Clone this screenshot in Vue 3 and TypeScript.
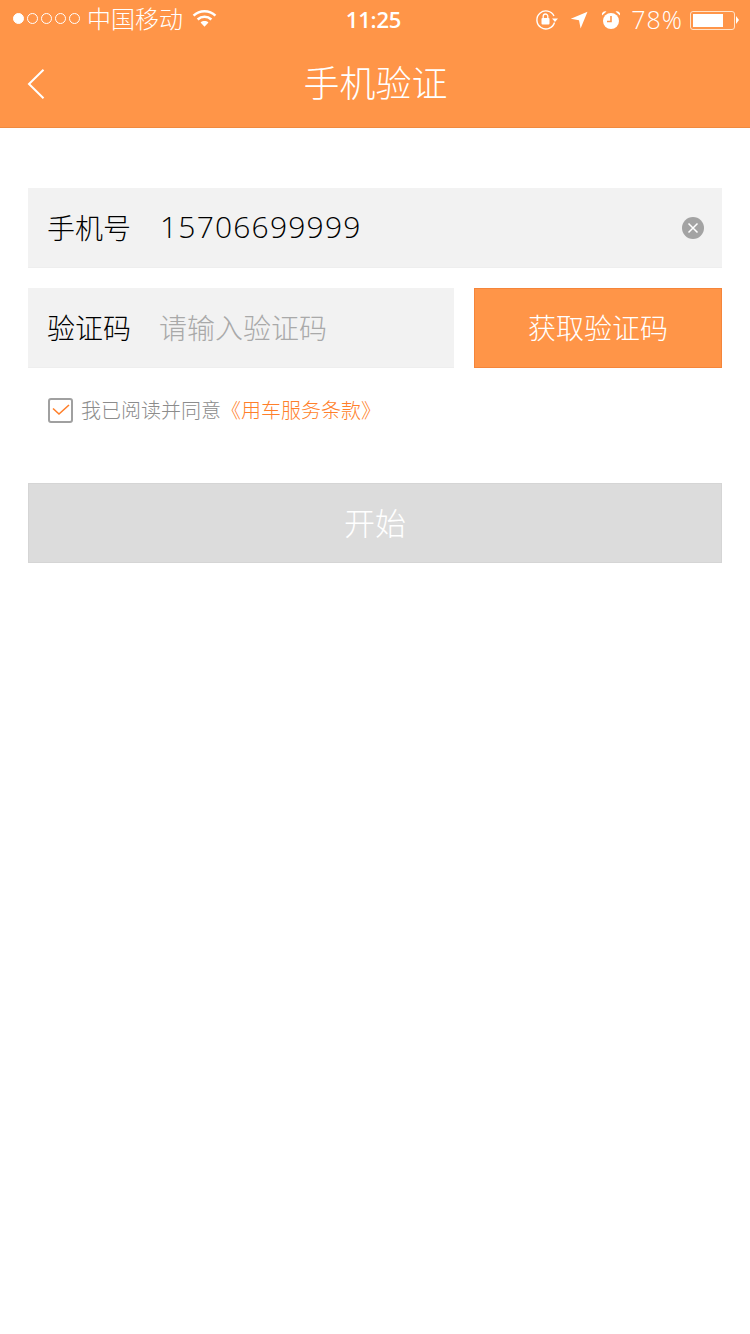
<script setup lang="ts">
const dots: boolean[] = [true, false, false, false, false]
</script>

<template>
  <div class="page">
    <header class="header">
      <div class="status">
        <div class="status-left">
          <div class="dots">
            <span v-for="(on, i) in dots" :key="i" class="dot" :class="{ on }"></span>
          </div>
          <span class="carrier">中国移动</span>
          <svg class="wifi" width="25" height="19" viewBox="0 0 24 18">
            <path d="M1.5 6.2C7.4 .6 16.6 .6 22.5 6.2" fill="none" stroke="#fff" stroke-width="2.4" />
            <path d="M5.4 10C9.2 6.5 14.8 6.5 18.6 10" fill="none" stroke="#fff" stroke-width="2.4" />
            <path d="M8.2 12.8C10.4 10.9 13.6 10.9 15.8 12.8L12 17Z" fill="#fff" />
          </svg>
        </div>
        <span class="time">11:25</span>
        <div class="status-right">
          <svg class="ic-lock" width="24" height="22" viewBox="0 0 24 22">
            <path d="M19.5 13.5A9 9 0 1 1 19 7" fill="none" stroke="#fff" stroke-width="1.4" />
            <path d="M17 9.5h6l-3 3.5Z" fill="#fff" />
            <rect x="6.5" y="9" width="8" height="6.5" rx="1" fill="#fff" />
            <path d="M8.2 9V7.3a2.3 2.3 0 0 1 4.6 0V9" fill="none" stroke="#fff" stroke-width="1.3" />
          </svg>
          <svg class="ic-arrow" width="18" height="18" viewBox="0 0 18 18">
            <path d="M17.5 .8L10.6 17.5 9 9.2 .8 7.8Z" fill="#fff" />
          </svg>
          <svg class="ic-alarm" width="20" height="20" viewBox="0 0 20 20">
            <circle cx="10" cy="11" r="8" fill="#fff" />
            <path d="M10 6v5.5H6" fill="none" stroke="#ff9548" stroke-width="1.6" />
            <path d="M1 5.5A3.4 3.4 0 0 1 5.5 1.4ZM19 5.5A3.4 3.4 0 0 0 14.5 1.4Z" fill="#fff" />
          </svg>
          <span class="percent">78%</span>
          <div class="battery">
            <div class="battery-body"><div class="battery-fill"></div></div>
            <span class="battery-tip"></span>
          </div>
        </div>
      </div>
      <div class="nav">
        <svg class="back" width="18" height="30" viewBox="0 0 18 30">
          <path d="M16.5 .8L2 15 16.5 29.2" fill="none" stroke="#fff" stroke-width="2" />
        </svg>
        <h1 class="title">手机验证</h1>
      </div>
    </header>

    <main class="form">
      <div class="field">
        <span class="label">手机号</span>
        <span class="value">15706699999</span>
        <span class="clear">
          <svg width="12" height="12" viewBox="0 0 12 12">
            <path d="M1.5 1.5L10.5 10.5M10.5 1.5L1.5 10.5" stroke="#fff" stroke-width="1.5" />
          </svg>
        </span>
      </div>

      <div class="code-row">
        <div class="field code-field">
          <span class="label">验证码</span>
          <span class="placeholder">请输入验证码</span>
        </div>
        <button class="code-btn" type="button">获取验证码</button>
      </div>

      <div class="agree">
        <span class="check">
          <svg width="18" height="14" viewBox="0 0 18 14">
            <path d="M1 5.5L7 11 17 2" fill="none" stroke="#ff7f2a" stroke-width="1.6" />
          </svg>
        </span>
        <span class="agree-text">我已阅读并同意</span><span class="agree-link">《用车服务条款》</span>
      </div>

      <button class="start" type="button">开始</button>
    </main>
  </div>
</template>

<style scoped>
.page {
  width: 750px;
  height: 1334px;
  background: #fff;
  font-family: "Noto Sans CJK SC", "Liberation Sans", sans-serif;
  font-weight: 300;
  overflow: hidden;
}
.header {
  height: 128px;
  box-sizing: border-box;
  background: #ff9548;
  border-bottom: 1px solid #ef8a40;
  color: #fff;
}
.status {
  height: 40px;
  padding: 0 11px 0 13px;
  display: grid;
  grid-template-columns: 1fr auto 1fr;
  align-items: center;
}
.status-left,
.status-right {
  display: flex;
  align-items: center;
}
.status-right {
  justify-content: flex-end;
}
.dots {
  display: flex;
  gap: 3px;
  margin-top: -3px;
}
.dot {
  width: 11px;
  height: 11px;
  box-sizing: border-box;
  border: 1px solid #fff;
  border-radius: 50%;
}
.dot.on {
  background: #fff;
}
.carrier {
  margin-left: 7px;
  font-size: 24px;
  line-height: 40px;
  margin-top: -5px;
}
.wifi {
  margin-left: 9px;
  margin-top: -4px;
}
.time {
  font-family: "Open Sans", "Liberation Sans", sans-serif;
  font-size: 22px;
  font-weight: 600;
  letter-spacing: -0.2px;
  margin: -3px 0 0 -5px;
}
.ic-lock {
  margin-right: 11px;
}
.ic-arrow {
  margin-right: 13px;
}
.ic-alarm {
  margin-right: 10px;
}
.percent {
  font-family: "Open Sans", "Liberation Sans", sans-serif;
  font-size: 25px;
  font-weight: 300;
  letter-spacing: 1px;
  margin-right: 7px;
  margin-top: -2px;
}
.battery {
  display: flex;
  align-items: center;
}
.battery-body {
  width: 45px;
  height: 19px;
  box-sizing: border-box;
  border: 1px solid #ffe3c9;
  border-radius: 3px;
  padding: 2px;
}
.battery-fill {
  width: 78%;
  height: 100%;
  background: #fff;
}
.battery-tip {
  margin-left: 1px;
  width: 0;
  height: 0;
  border-left: 3px solid #fff;
  border-top: 4px solid transparent;
  border-bottom: 4px solid transparent;
}
.nav {
  height: 87px;
  position: relative;
  display: flex;
  align-items: center;
  justify-content: center;
}
.back {
  position: absolute;
  left: 27px;
  top: 29px;
}
.title {
  margin: -6px 0 0 1px;
  font-size: 36px;
  font-weight: 300;
}
.form {
  padding: 60px 28px 0;
}
.field {
  height: 80px;
  box-sizing: border-box;
  padding: 0 18px 0 19px;
  background: #f2f2f2;
  border-bottom: 1px solid #eeeeee;
  display: flex;
  align-items: center;
}
.label {
  width: 112px;
  flex: none;
  font-size: 28px;
  color: #000;
  font-weight: 300;
  margin-top: -2px;
}
.value {
  flex: 1;
  margin-left: 1px;
  font-family: "Open Sans", "Liberation Sans", sans-serif;
  font-size: 30px;
  font-weight: 300;
  letter-spacing: 1.2px;
  color: #000;
  margin-top: -2px;
}
.clear {
  width: 22px;
  height: 22px;
  border-radius: 50%;
  background: #a3a3a3;
  display: flex;
  align-items: center;
  justify-content: center;
}
.code-row {
  margin-top: 20px;
  display: flex;
  gap: 20px;
}
.code-field {
  flex: 1;
}
.placeholder {
  font-size: 28px;
  color: #a9a9a9;
  margin-top: -2px;
}
.code-btn {
  width: 248px;
  height: 80px;
  padding: 0 0 3px;
  border: 1px solid #f5853a;
  background: #ff9548;
  color: #fff;
  font: inherit;
  font-size: 28px;
  font-weight: 300;
}
.agree {
  margin-top: 29px;
  padding-left: 20px;
  height: 26px;
  display: flex;
  align-items: center;
  font-size: 20px;
}
.check {
  width: 25px;
  height: 25px;
  box-sizing: border-box;
  border: 2px solid #a0a0a0;
  border-radius: 3px;
  margin-right: 8px;
  display: flex;
  align-items: center;
  justify-content: center;
}
.agree-text {
  color: #8c8c8c;
  margin-top: -2px;
}
.agree-link {
  color: #ff7f2a;
  margin-top: -2px;
}
.start {
  margin-top: 60px;
  width: 100%;
  height: 80px;
  padding: 0 0 3px;
  border: 1px solid #d5d5d5;
  background: #dcdcdc;
  color: #fff;
  font: inherit;
  font-size: 31px;
  font-weight: 300;
}
</style>
